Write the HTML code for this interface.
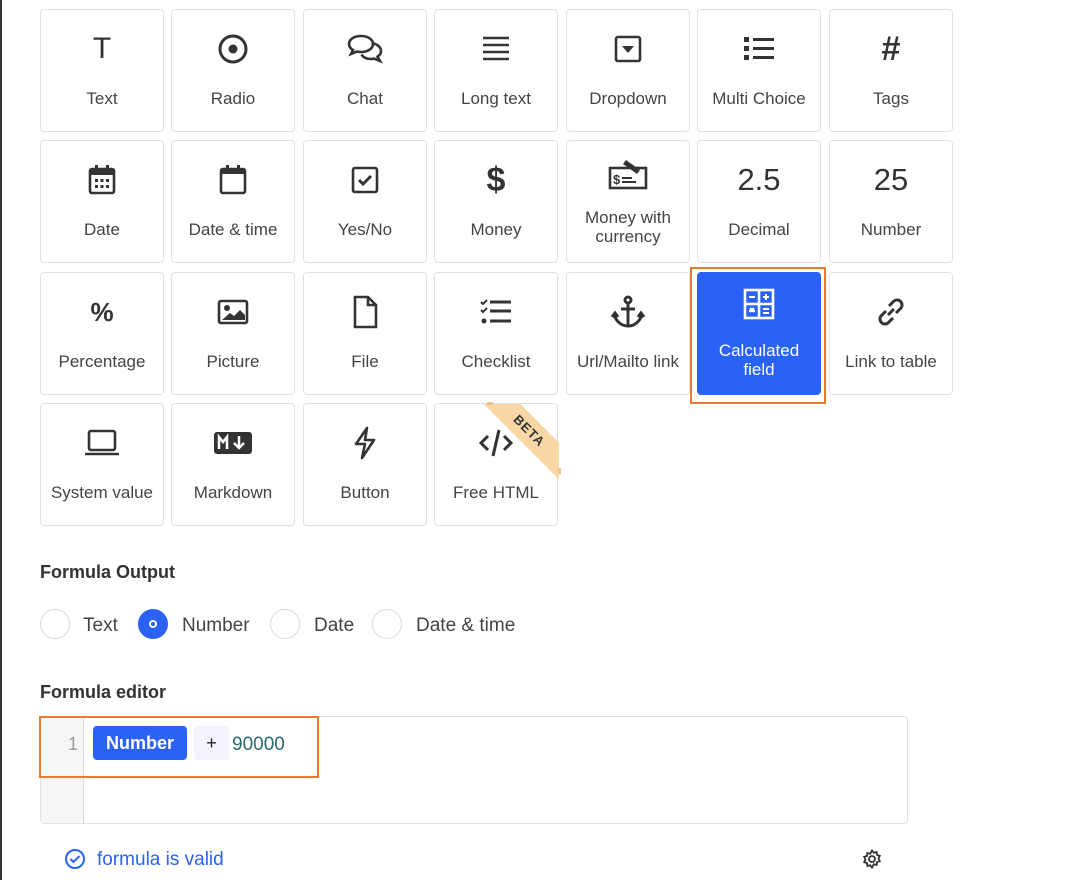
<!DOCTYPE html><html><head><style>
body{margin:0;width:1082px;height:880px;background:#fff;font-family:"Liberation Sans",sans-serif;color:#333;position:relative;overflow:hidden}
.lb{position:absolute;left:0;top:0;width:2px;height:880px;background:#333}
.t{position:absolute;width:122px;height:121px;border:1px solid #dde2e6;border-radius:4px;background:#fff;overflow:hidden}
.t .ic{position:absolute;left:0;right:0;top:22px;height:34px;display:flex;justify-content:center;align-items:center;color:#333}
.t .lab{position:absolute;left:0;right:0;top:79px;text-align:center;font-size:17px;color:#444;line-height:19px}
.t.sel{background:#2a62f6;border-color:#2a62f6}
.t.sel .lab{color:#fff}
.ob{position:absolute;border:2px solid #ea7a2f}
h3{position:absolute;margin:0;font-size:18px;font-weight:bold;color:#333}
.r{position:absolute;top:609px;width:28px;height:28px;border:1px solid #d5d9dd;border-radius:50%}
.rl{position:absolute;top:615px;font-size:19px;color:#444}
svg{display:block}
</style></head><body>
<div class="lb"></div>

<div class="t" style="left:40px;top:9px"><div class="ic" style="font-size:30px;color:#333">T</div><div class="lab">Text</div></div>
<div class="t" style="left:171px;top:9px"><div class="ic"><svg width="32" height="32"><circle cx="16" cy="16" r="13" fill="none" stroke="#333" stroke-width="3"/><circle cx="16" cy="16" r="4.5" fill="#333"/></svg></div><div class="lab">Radio</div></div>
<div class="t" style="left:303px;top:9px"><div class="ic"><svg width="38" height="32" fill="none" stroke="#333" stroke-width="2.6"><path d="M15 3C8 3 3 6.5 3 11c0 2.5 1.5 4.5 4 6l-2 4 6-2.5c1.3.3 2.6.5 4 .5 7 0 12-3.5 12-8S22 3 15 3z"/><path d="M26 10c5 1 9 4 9 8 0 2.3-1.3 4.3-3.5 5.6l2.5 4.4-6-2.4c-1 .2-2 .4-3 .4-4.5 0-8-1.8-9.5-4.5"/></svg></div><div class="lab">Chat</div></div>
<div class="t" style="left:434px;top:9px"><div class="ic"><svg width="30" height="28" stroke="#333" stroke-width="2.6"><path d="M2 3h26M2 10h26M2 17h26M2 24h26"/></svg></div><div class="lab">Long text</div></div>
<div class="t" style="left:566px;top:9px"><div class="ic"><svg width="30" height="30"><rect x="3" y="3" width="24" height="24" rx="2" fill="none" stroke="#333" stroke-width="2.6"/><path d="M9 12h12l-6 7z" fill="#333"/></svg></div><div class="lab">Dropdown</div></div>
<div class="t" style="left:697px;top:9px"><div class="ic"><svg width="32" height="28" fill="#333"><rect x="1" y="2" width="5" height="5"/><rect x="1" y="11" width="5" height="5"/><rect x="1" y="20" width="5" height="5"/><rect x="10" y="3" width="21" height="3"/><rect x="10" y="12" width="21" height="3"/><rect x="10" y="21" width="21" height="3"/></svg></div><div class="lab">Multi Choice</div></div>
<div class="t" style="left:829px;top:9px"><div class="ic" style="font-size:34px;font-weight:bold;color:#333">#</div><div class="lab">Tags</div></div>

<div class="t" style="left:40px;top:140px"><div class="ic"><svg width="30" height="32"><rect x="3" y="5" width="24" height="24" rx="2" fill="none" stroke="#333" stroke-width="2.6"/><rect x="3" y="5" width="24" height="6" fill="#333"/><rect x="8" y="1" width="3" height="6" fill="#333"/><rect x="19" y="1" width="3" height="6" fill="#333"/><g fill="#333"><rect x="8" y="15" width="3" height="3"/><rect x="13.5" y="15" width="3" height="3"/><rect x="19" y="15" width="3" height="3"/><rect x="8" y="21" width="3" height="3"/><rect x="13.5" y="21" width="3" height="3"/><rect x="19" y="21" width="3" height="3"/></g></svg></div><div class="lab">Date</div></div>
<div class="t" style="left:171px;top:140px"><div class="ic"><svg width="30" height="32"><rect x="3" y="5" width="24" height="24" rx="2" fill="none" stroke="#333" stroke-width="2.6"/><rect x="3" y="5" width="24" height="5" fill="#333"/><rect x="8" y="1" width="3" height="6" fill="#333"/><rect x="19" y="1" width="3" height="6" fill="#333"/></svg></div><div class="lab">Date &amp; time</div></div>
<div class="t" style="left:303px;top:140px"><div class="ic"><svg width="30" height="30"><rect x="3" y="3" width="24" height="24" rx="2" fill="none" stroke="#333" stroke-width="2.6"/><path d="M9 15l4 4 8-8" fill="none" stroke="#333" stroke-width="3"/></svg></div><div class="lab">Yes/No</div></div>
<div class="t" style="left:434px;top:140px"><div class="ic" style="font-size:34px;font-weight:bold">$</div><div class="lab">Money</div></div>
<div class="t" style="left:566px;top:140px"><div class="ic" style="top:16px"><svg width="40" height="32"><rect x="2" y="10" width="36" height="20" fill="none" stroke="#333" stroke-width="2.6"/><text x="5" y="26" font-size="13" font-weight="bold" fill="#333" font-family="Liberation Sans">$</text><path d="M14 20h10M14 24h14" stroke="#333" stroke-width="2"/><path d="M18 2l14 10-3 4-14-10z" fill="#333"/></svg></div><div class="lab" style="top:67px">Money with<br>currency</div></div>
<div class="t" style="left:697px;top:140px"><div class="ic" style="font-size:31px">2.5</div><div class="lab">Decimal</div></div>
<div class="t" style="left:829px;top:140px"><div class="ic" style="font-size:31px">25</div><div class="lab">Number</div></div>

<div class="t" style="left:40px;top:272px"><div class="ic" style="font-size:26px;font-weight:bold">%</div><div class="lab">Percentage</div></div>
<div class="t" style="left:171px;top:272px"><div class="ic"><svg width="32" height="28"><rect x="2" y="3" width="28" height="22" rx="2" fill="none" stroke="#333" stroke-width="2.6"/><circle cx="10" cy="10" r="3" fill="#333"/><path d="M5 22l8-7 4 3 6-6 5 5v5z" fill="#333"/></svg></div><div class="lab">Picture</div></div>
<div class="t" style="left:303px;top:272px"><div class="ic"><svg width="28" height="34" fill="none" stroke="#333" stroke-width="2.6"><path d="M4 2h13l8 8v22H4z M17 2v8h8"/></svg></div><div class="lab">File</div></div>
<div class="t" style="left:434px;top:272px"><div class="ic"><svg width="34" height="30"><path d="M2 5l2 2 4-4M2 13l2 2 4-4" fill="none" stroke="#333" stroke-width="2"/><circle cx="5" cy="24" r="2.5" fill="#333"/><path d="M11 5h21M11 14h21M11 24h21" stroke="#333" stroke-width="3"/></svg></div><div class="lab">Checklist</div></div>
<div class="t" style="left:566px;top:272px"><div class="ic"><svg width="36" height="34" fill="none" stroke="#333" stroke-width="3"><circle cx="18" cy="5" r="3"/><path d="M18 8v23M11 14h14M4 19c2 8 8 12 14 12s12-4 14-12"/><path d="M2 22l3-4 3 4M28 22l3-4 3 4"/></svg></div><div class="lab">Url/Mailto link</div></div>
<div class="ob" style="left:690px;top:267px;width:132px;height:133px"></div>
<div class="t sel" style="left:697px;top:272px"><div class="ic" style="top:14px"><svg width="32" height="32"><rect x="2" y="2" width="28" height="28" fill="none" stroke="#fff" stroke-width="2.6"/><path d="M16 2v28M2 16h28" stroke="#fff" stroke-width="2.6"/><path d="M6 9h6M20 9h6M23 6v6M6 23h6M20 21h6M20 25h6M7 20l4 4M11 20l-4 4" stroke="#fff" stroke-width="2"/></svg></div><div class="lab" style="top:68px;color:#fff">Calculated<br>field</div></div>
<div class="t" style="left:829px;top:272px"><div class="ic"><svg width="34" height="34" fill="none" stroke="#333" stroke-width="3"><path d="M14 20l6-6"/><path d="M12 16l-5 5a5 5 0 0 0 7 7l5-5"/><path d="M22 18l5-5a5 5 0 0 0-7-7l-5 5"/></svg></div><div class="lab">Link to table</div></div>

<div class="t" style="left:40px;top:403px"><div class="ic"><svg width="38" height="30" fill="none" stroke="#333" stroke-width="2.6"><rect x="6" y="3" width="26" height="19" rx="2"/><path d="M2 26h34"/></svg></div><div class="lab">System value</div></div>
<div class="t" style="left:171px;top:403px"><div class="ic"><svg width="40" height="26"><rect x="1" y="2" width="38" height="22" rx="3" fill="#333"/><path d="M6 19V7l4 5 4-5v12" fill="none" stroke="#fff" stroke-width="2.5"/><path d="M26 6v10M21 13l5 5 5-5" fill="none" stroke="#fff" stroke-width="2.5"/></svg></div><div class="lab">Markdown</div></div>
<div class="t" style="left:303px;top:403px"><div class="ic"><svg width="26" height="34" fill="none" stroke="#333" stroke-width="2.6" stroke-linejoin="round"><path d="M15 2L4 18h9l-3 14 12-18h-9z"/></svg></div><div class="lab">Button</div></div>
<div class="t" style="left:434px;top:403px;overflow:visible"><div class="ic"><svg width="36" height="32" fill="none" stroke="#333" stroke-width="3"><path d="M10 9l-7 7 7 7M26 9l7 7-7 7M21 3l-6 26"/></svg></div><div class="lab">Free HTML</div>
<div style="position:absolute;left:0;top:0;width:124px;height:123px;overflow:hidden;border-radius:4px"><div style="position:absolute;right:-30px;top:14px;width:120px;height:26px;background:#f8d7a4;transform:rotate(45deg);text-align:center;font-size:13px;font-weight:bold;line-height:26px;color:#333;letter-spacing:1px">BETA</div></div>
<div style="position:absolute;left:52px;top:-2px;width:6px;height:3px;background:#e9c48c"></div>
<div style="position:absolute;left:123px;top:64px;width:3px;height:6px;background:#e9c48c"></div>
</div>

<h3 style="left:40px;top:562px">Formula Output</h3>
<div class="r" style="left:40px"></div><div class="rl" style="left:83px">Text</div>
<div class="r" style="left:138px;background:#2a62f6;border-color:#2a62f6"><div style="position:absolute;left:10px;top:10px;width:4px;height:4px;border:2px solid #fff;border-radius:50%"></div></div><div class="rl" style="left:182px">Number</div>
<div class="r" style="left:270px"></div><div class="rl" style="left:314px">Date</div>
<div class="r" style="left:372px"></div><div class="rl" style="left:416px">Date &amp; time</div>

<h3 style="left:40px;top:682px">Formula editor</h3>
<div style="position:absolute;left:40px;top:716px;width:866px;height:106px;border:1px solid #dde2e6;border-radius:4px;overflow:hidden">
<div style="position:absolute;left:0;top:0;width:42px;height:106px;background:#f6f6f6;border-right:1px solid #ddd"></div>
<div style="position:absolute;left:27px;top:17px;font-size:18px;color:#999">1</div>
<div style="position:absolute;left:52px;top:9px;width:94px;height:34px;background:#2a62f6;border-radius:4px;color:#fff;font-weight:bold;font-size:18px;line-height:34px;text-align:center">Number</div>
<div style="position:absolute;left:153px;top:9px;width:35px;height:34px;background:#f2f3fc;border-radius:4px;color:#222;font-size:18px;line-height:34px;text-align:center">+</div>
<div style="position:absolute;left:191px;top:17px;font-size:19px;color:#2a6a6a">90000</div>
</div>
<div class="ob" style="left:39px;top:716px;width:276px;height:58px"></div>

<svg style="position:absolute;left:64px;top:848px" width="22" height="22" fill="none" stroke="#2a62f6" stroke-width="2"><circle cx="11" cy="11" r="9"/><path d="M6.5 11l3 3 6-6"/></svg>
<div style="position:absolute;left:97px;top:849px;font-size:19px;color:#2a62f6">formula is valid</div>
<svg style="position:absolute;left:862px;top:849px" width="20" height="20" fill="none" stroke="#333" stroke-width="1.8"><circle cx="10" cy="10" r="3"/><path d="M10 1.5l1.8 2.3 2.8-.8.4 2.9 2.8 1-1.3 2.6 1.3 2.6-2.8 1-.4 2.9-2.8-.8L10 18.5l-1.8-2.3-2.8.8-.4-2.9-2.8-1 1.3-2.6-1.3-2.6 2.8-1 .4-2.9 2.8.8z"/></svg>
</body></html>
